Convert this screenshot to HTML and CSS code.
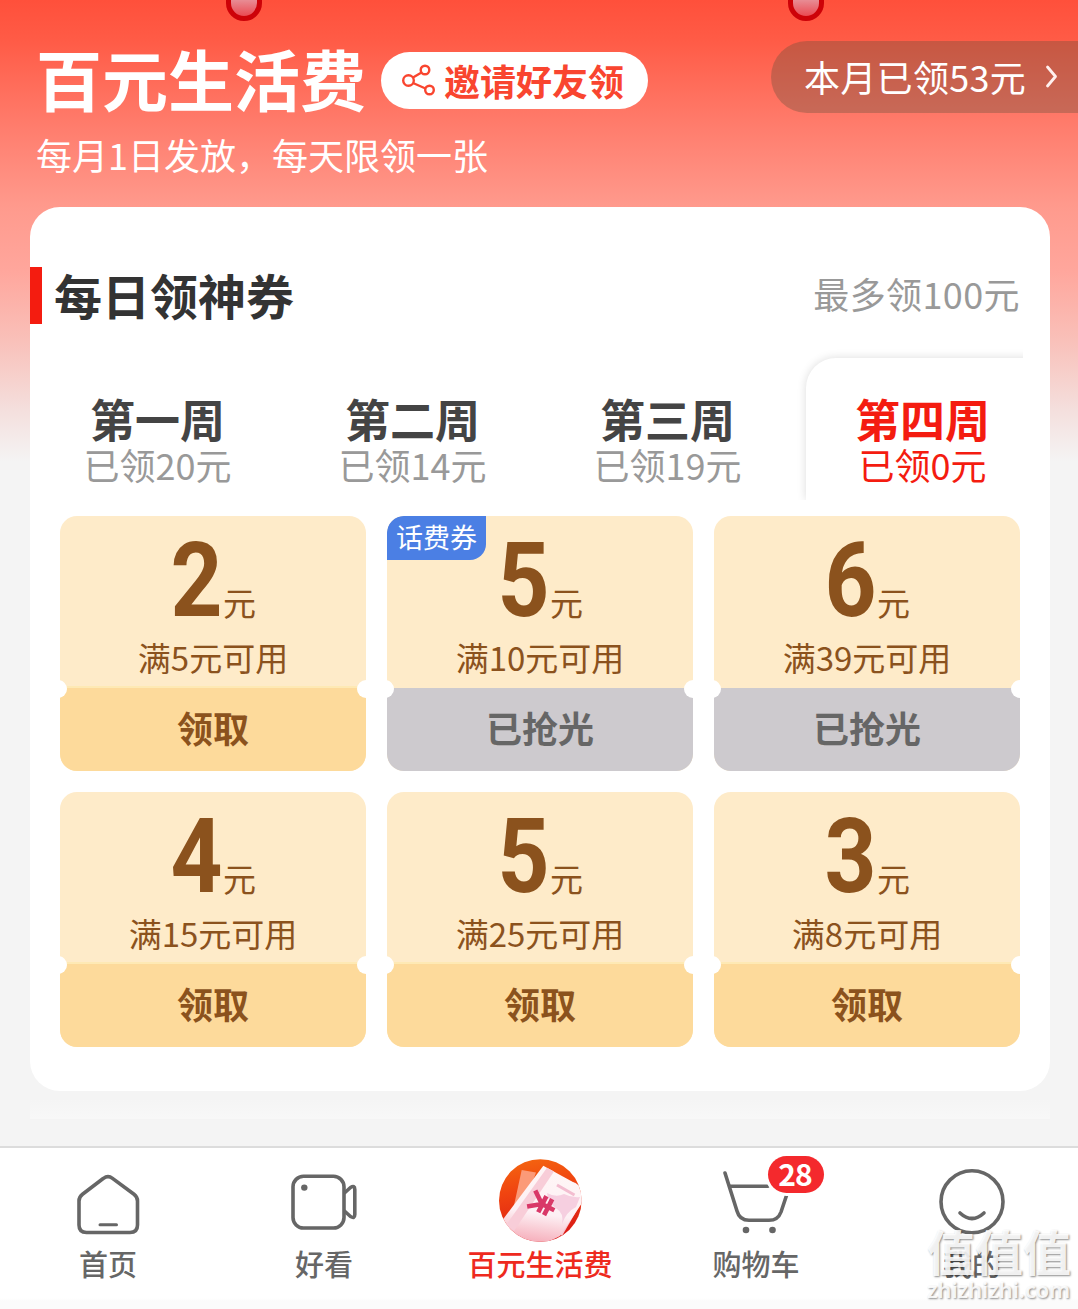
FILE: index.html
```
<!DOCTYPE html>
<html lang="zh-CN">
<head>
    <meta charset="UTF-8">
    <meta name="viewport" content="width=device-width, initial-scale=1.0">
    <title>百元生活费</title>
    <link rel="stylesheet" href="styles.css">
</head>
<body>
    <div class="ring ring-left"></div>
    <div class="ring ring-right"></div>

    <header class="hero">
        <div class="hero-row">
            <h1>百元生活费</h1>
            <div class="invite">
                <svg width="34" height="34" viewBox="0 0 34 34" fill="none" stroke="#f9452f" stroke-width="2.4">
                    <circle cx="6.5" cy="16.5" r="5.3"/>
                    <circle cx="23" cy="6" r="4.3"/>
                    <circle cx="27.5" cy="26" r="4.3"/>
                    <path d="M11 13.500 L19.500 8.500 M11 19 L23.500 24.500"/>
                </svg>
                <span>邀请好友领</span>
            </div>
            <div class="month-total">
                <span>本月已领53元</span>
                <svg width="14" height="24" viewBox="0 0 14 24" fill="none" stroke="#fff0ee" stroke-width="2.8" stroke-linecap="round" stroke-linejoin="round">
                    <path d="M2.500 3 L10.500 12.500 L2.500 22"/>
                </svg>
            </div>
        </div>
        <p class="subtitle">每月1日发放，每天限领一张</p>
    </header>

    <main class="card">
        <div class="card-head">
            <h2>每日领神券</h2>
            <span class="max">最多领100元</span>
        </div>

        <div class="tabs">
            <div class="tab"><b>第一周</b><span>已领20元</span></div>
            <div class="tab"><b>第二周</b><span>已领14元</span></div>
            <div class="tab"><b>第三周</b><span>已领19元</span></div>
            <div class="tab active"><b>第四周</b><span>已领0元</span></div>
        </div>

        <div class="coupons">
            <div class="coupon">
                <div class="info">
                    <div class="amount"><span>2</span><small>元</small></div>
                    <div class="condition">满5元可用</div>
                </div>
                <div class="action">领取</div>
            </div>
            <div class="coupon sold-out">
                <span class="tag">话费券</span>
                <div class="info">
                    <div class="amount"><span>5</span><small>元</small></div>
                    <div class="condition">满10元可用</div>
                </div>
                <div class="action">已抢光</div>
            </div>
            <div class="coupon sold-out">
                <div class="info">
                    <div class="amount"><span>6</span><small>元</small></div>
                    <div class="condition">满39元可用</div>
                </div>
                <div class="action">已抢光</div>
            </div>
            <div class="coupon">
                <div class="info">
                    <div class="amount"><span>4</span><small>元</small></div>
                    <div class="condition">满15元可用</div>
                </div>
                <div class="action">领取</div>
            </div>
            <div class="coupon">
                <div class="info">
                    <div class="amount"><span>5</span><small>元</small></div>
                    <div class="condition">满25元可用</div>
                </div>
                <div class="action">领取</div>
            </div>
            <div class="coupon">
                <div class="info">
                    <div class="amount"><span>3</span><small>元</small></div>
                    <div class="condition">满8元可用</div>
                </div>
                <div class="action">领取</div>
            </div>
        </div>
    </main>

    <div class="next-card"></div>

    <nav class="tabbar">
        <div class="nav-item">
            <svg class="line-icon" width="88" height="84" viewBox="0 0 88 84">
                <path d="M39.5 20.3 Q44 16.8 48.5 20.3 L70 36.3 Q73.5 39 73.5 43 V67 Q73.5 74.5 66 74.5 H22.5 Q15 74.5 15 67 V43 Q15 39 18.5 36.3 Z"/>
                <path class="thin" d="M36 66.700 H52.500"/>
            </svg>
            <span>首页</span>
        </div>
        <div class="nav-item">
            <svg class="line-icon" width="88" height="84" viewBox="0 0 88 84">
                <rect x="13" y="18.3" width="51" height="51.7" rx="10.5"/>
                <circle class="dot" cx="24.3" cy="29.6" r="3.2"/>
                <path d="M65 34.500 L70.500 29.500 Q74.800 27 74.800 31.500 V56.500 Q74.800 61 70.500 58.500 L65 53.500"/>
            </svg>
            <span>好看</span>
        </div>
        <div class="nav-item current">
            <svg width="88" height="84" viewBox="0 0 88 84">
                <defs>
                    <clipPath id="round"><circle cx="44.300" cy="42.500" r="41.300"/></clipPath>
                    <linearGradient id="red" x1="0.400" y1="0" x2="0.600" y2="1">
                        <stop offset="0" stop-color="#f46410"/>
                        <stop offset="0.350" stop-color="#f04410"/>
                        <stop offset="1" stop-color="#d81616"/>
                    </linearGradient>
                    <linearGradient id="paper" x1="0.500" y1="0" x2="0.350" y2="1">
                        <stop offset="0" stop-color="#fff6f6"/>
                        <stop offset="0.600" stop-color="#fdf0f4"/>
                        <stop offset="1" stop-color="#f5a9b6"/>
                    </linearGradient>
                </defs>
                <g clip-path="url(#round)">
                    <rect width="88" height="84" fill="url(#red)"/>
                    <path d="M25.700 12 L40 14.500 L30 42 L17 52 Z" fill="#fb9a78"/>
                    <path d="M64 21 L80 25 L88 40 L66 78 L50 60 Z" fill="#f9c4cd"/>
                    <path d="M47.300 7.700 L86 29 V45 L64 78 L48 86 L20 84 L5 64 Z" fill="url(#paper)"/>
                    <path d="M51 9.700 L58 13.500 L18 73 L10 67 Z" fill="#f8cdd8"/>
                    <path d="M51 35 Q60 40 68 36 Q76 40 84 39 L80 49 Q70 54 66 66 Q68 55 61 51 Q52 45 51 35 Z" fill="#f6cfe0"/>
                    <path d="M61 27 L78.500 37" stroke="#f3bdd0" stroke-width="3"/>
                    <g transform="translate(45 45.500) rotate(-63)" fill="none" stroke="#d93868" stroke-width="4.600">
                        <path d="M-9 -11 L0 1 L9 -11 M0 1 V15 M-9 1.500 H9 M-9 8 H9"/>
                    </g>
                </g>
            </svg>
            <span>百元生活费</span>
        </div>
        <div class="nav-item">
            <svg class="line-icon" width="88" height="84" viewBox="0 0 88 84">
                <path d="M13 15 L25 53 Q27.500 62.300 37 62.300 H57 Q66 62.300 69 54 L76 33"/>
                <path d="M18 28.300 H56"/>
                <circle class="dot" cx="34" cy="72" r="3.300"/>
                <circle class="dot" cx="60.500" cy="72" r="3.300"/>
            </svg>
            <i class="badge">28</i>
            <span>购物车</span>
        </div>
        <div class="nav-item">
            <svg class="line-icon" width="88" height="84" viewBox="0 0 88 84">
                <circle cx="44" cy="43.800" r="31"/>
                <path d="M32 55 Q44 66 56 55"/>
            </svg>
            <span>我的</span>
        </div>
    </nav>

    <div class="watermark">
        <strong>值值值</strong>
        <em>zhizhizhi.com</em>
    </div>
</body>
</html>
```
FILE: styles.css
```
* {
    box-sizing: border-box;
}

body {
    position: relative;
    width: 1078px;
    height: 1309px;
    margin: 0;
    overflow: hidden;
    background: linear-gradient(#ff503b 0, #ff5b46 40px, #ff7c6c 125px, #ff9a8d 207px, #ffa69c 270px, #f9c0b9 340px, #f4dfdd 410px, #f4f4f4 462px);
    font-family: 'Noto Sans CJK SC', 'Noto Sans', sans-serif;
    color: #333;
}

h1, h2, p {
    margin: 0;
}

.ring {
    position: absolute;
    top: -20px;
    width: 36px;
    height: 41px;
    border: 5px solid #cd0208;
    border-radius: 18px;
    background: linear-gradient(#e88a92 50%, #ea4a52);
}

.ring-left {
    left: 226px;
}

.ring-right {
    left: 788px;
}

/* header */
.hero {
    height: 207px;
    padding: 41px 0 0 36px;
    color: #fff;
}

.hero-row {
    display: flex;
    align-items: center;
    height: 72px;
}

h1 {
    font-size: 66px;
    line-height: 70px;
}

.invite {
    display: flex;
    align-items: center;
    width: 267px;
    height: 57px;
    margin: 7px 0 0 15px;
    padding-left: 21px;
    gap: 8px;
    border-radius: 29px;
    background: #fff;
    color: #f9452f;
    font-size: 36px;
    font-weight: bold;
    line-height: 57px;
}

.month-total {
    display: flex;
    align-items: center;
    width: 307px;
    height: 72px;
    margin-left: auto;
    padding: 0 0 2px 33px;
    gap: 19px;
    border-radius: 36px 0 0 36px;
    background: rgba(95, 78, 58, 0.34);
    font-size: 36px;
    letter-spacing: 0.3px;
    line-height: 69px;
    white-space: nowrap;
}

.subtitle {
    margin-top: 17px;
    font-size: 36px;
    line-height: 48px;
}

/* coupon card */
.card {
    width: 1020px;
    height: 884px;
    margin-left: 30px;
    padding-top: 60px;
    border-radius: 30px;
    background: #fff;
}

.card-head {
    display: flex;
    align-items: center;
    justify-content: space-between;
    height: 57px;
    padding: 0 30px 0 12px;
    border-left: 12px solid #f41c10;
}

h2 {
    padding-bottom: 3px;
    font-size: 48px;
    line-height: 54px;
}

.max {
    color: #999;
    font-size: 36px;
    letter-spacing: 0.4px;
    line-height: 52px;
    padding-bottom: 6px;
}

.tabs {
    display: flex;
    height: 142px;
    margin-top: 34px;
}

.tab {
    position: relative;
    display: flex;
    flex-direction: column;
    align-items: center;
    width: 255px;
    padding-top: 36px;
    color: #444;
}

.tab b {
    position: relative;
    font-size: 45px;
    line-height: 50px;
}

.tab span {
    position: relative;
    color: #999;
    font-size: 36px;
    line-height: 40px;
}

.tab.active b,
.tab.active span {
    color: #f41c10;
}

.tab.active::before {
    content: "";
    position: absolute;
    inset: 0 0 0 11px;
    border-radius: 30px 0 0 0;
    box-shadow: 0 0 10px rgba(0, 0, 0, 0.14);
    background: #fff;
    clip-path: inset(-12px 27px 0 -12px);
}

.coupons {
    display: grid;
    grid-template-columns: repeat(3, 306px);
    gap: 21px;
    margin-top: 16px;
    padding-left: 30px;
}

.coupon {
    position: relative;
    height: 255px;
    overflow: hidden;
    border-radius: 17px;
    background: #feebc9;
    color: #8b521d;
    text-align: center;
}

/* notches on both sides of the tear line */
.coupon::before,
.coupon::after {
    content: "";
    position: absolute;
    top: 164px;
    width: 18px;
    height: 18px;
    border-radius: 50%;
    background: #fff;
}

.coupon::before {
    left: -11px;
}

.coupon::after {
    right: -9px;
}

.info {
    height: 172px;
    padding-top: 15px;
    border-bottom: 2px solid #fee9b4;
}

.amount {
    height: 100px;
    font-family: Roboto, 'Noto Sans CJK SC', sans-serif;
    font-size: 103px;
    font-weight: bold;
    line-height: 100px;
}

.amount span {
    display: inline-block;
    margin: 0 -3px;
    transform: scaleX(0.88);
}

.amount small {
    font-family: 'Noto Sans CJK SC', sans-serif;
    font-size: 33px;
    font-weight: normal;
    line-height: 1;
}

.condition {
    margin-top: 6px;
    font-size: 33px;
    line-height: 40px;
}

.action {
    height: 83px;
    background: #fdda9b;
    font-size: 36px;
    font-weight: bold;
    line-height: 79px;
}

.sold-out .info {
    border-color: #feebc9;
}

.sold-out .action {
    background: #cdcace;
    color: #666;
}

.tag {
    position: absolute;
    top: 0;
    left: 0;
    width: 99px;
    height: 44px;
    border-radius: 16px 0 16px 0;
    background: #4b7fe4;
    color: #fff;
    font-size: 27px;
    line-height: 42px;
}

.next-card {
    height: 19px;
    margin: 9px 28px 27px 30px;
    background: linear-gradient(#f5f5f5, #f8f8f8);
}

/* bottom navigation */
.tabbar {
    display: flex;
    width: 1080px;
    height: 163px;
    padding-top: 10px;
    border-top: 2px solid #dcdcdc;
    background: linear-gradient(#fff 150px, #fbfbfb 153px);
}

.nav-item {
    position: relative;
    display: flex;
    flex-direction: column;
    align-items: center;
    width: 216px;
    color: #666;
    font-size: 29px;
    font-weight: 500;
    line-height: 42px;
}

.nav-item.current {
    color: #ee2a1e;
}

.line-icon {
    fill: none;
    stroke: #666;
    stroke-width: 3.6;
    stroke-linecap: round;
    stroke-linejoin: round;
}

.line-icon .thin {
    stroke-width: 3;
}

.line-icon .dot {
    fill: #666;
    stroke: none;
}

.badge {
    position: absolute;
    top: -2px;
    left: 120px;
    width: 56px;
    height: 37px;
    padding-right: 2px;
    border-radius: 19px;
    background: #f4292d;
    box-shadow: 0 0 0 3px #fff;
    color: #fff;
    font-size: 30px;
    font-style: normal;
    font-weight: bold;
    letter-spacing: -1px;
    line-height: 35px;
    text-align: center;
}

.watermark {
    position: absolute;
    left: 927px;
    top: 1225px;
    display: flex;
    flex-direction: column;
    color: rgba(255, 255, 255, 0.9);
    text-shadow: 1px 1px 2px rgba(0, 0, 0, 0.45);
}

.watermark strong {
    font-size: 48px;
    line-height: 50px;
}

.watermark em {
    font-family: 'Noto Sans', sans-serif;
    font-size: 21.800px;
    font-style: normal;
    font-weight: 600;
    line-height: 30px;
}
```
